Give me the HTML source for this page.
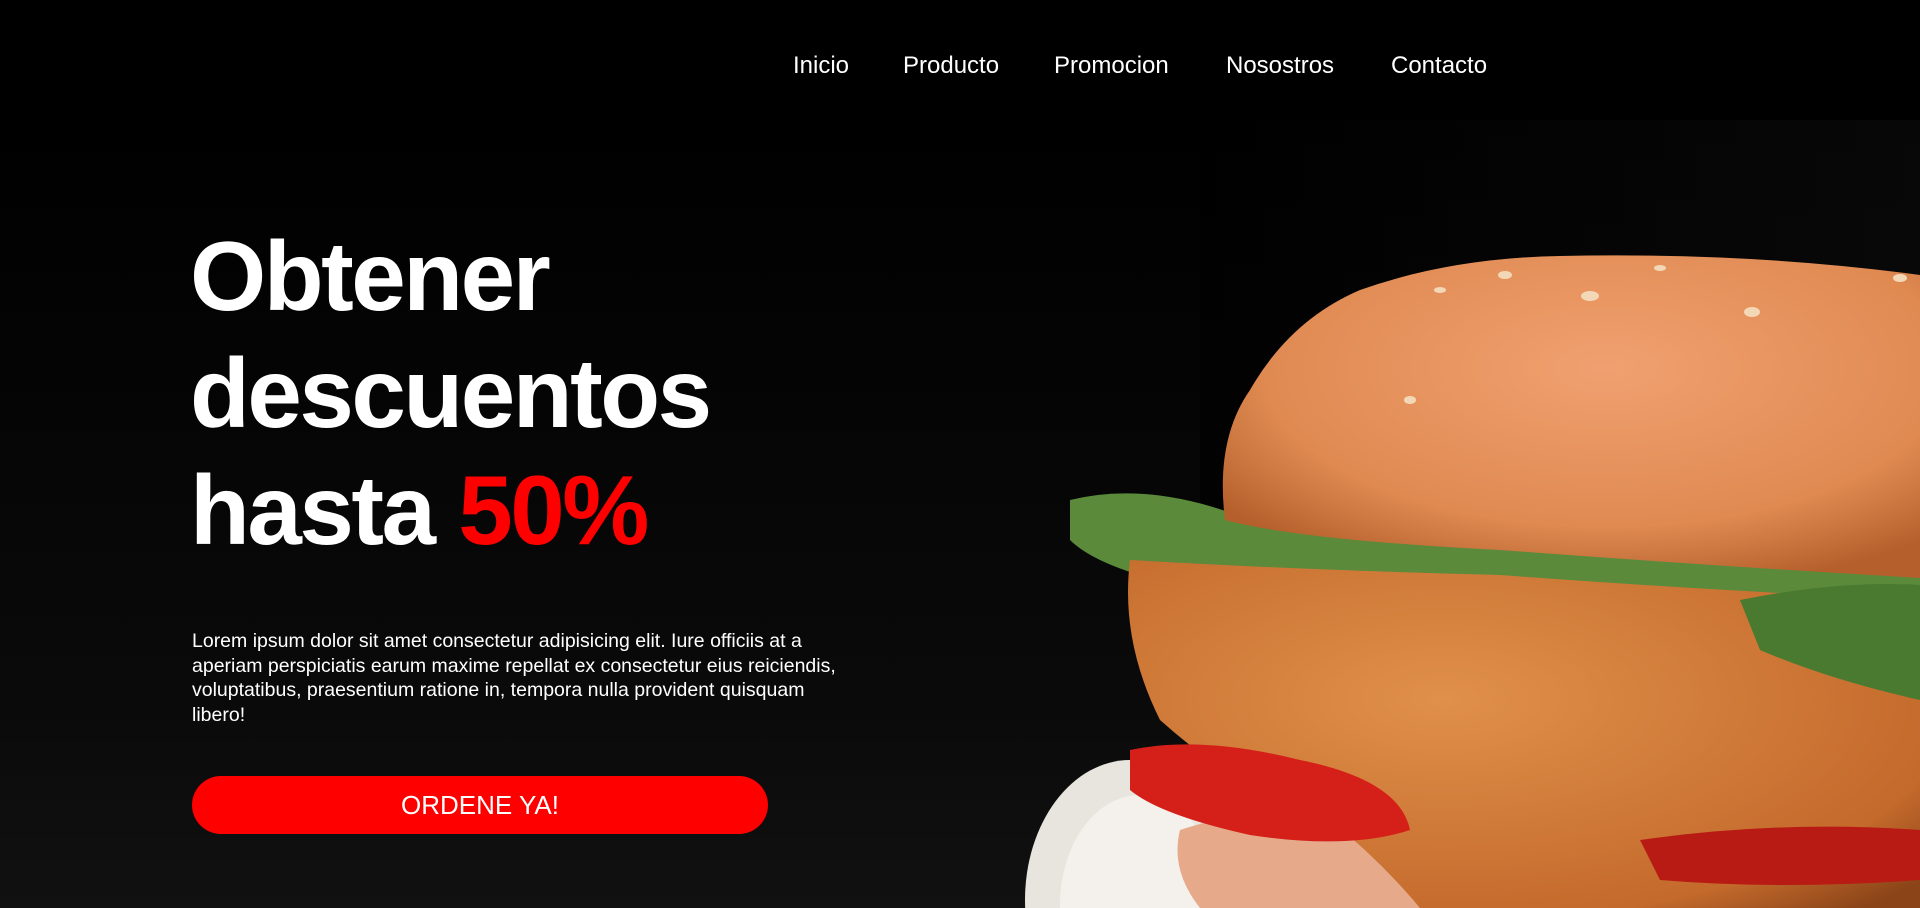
<!DOCTYPE html>
<html><head><meta charset="utf-8"><style>
*{margin:0;padding:0;box-sizing:border-box}
html,body{width:1920px;height:908px;overflow:hidden;background:#000;font-family:"Liberation Sans",Arial,sans-serif}
.hero{position:absolute;left:0;top:0;width:1920px;height:908px;background:linear-gradient(180deg,#000 0,#000 120px,#030303 300px,#0a0a0a 700px,#111 908px)}
nav{position:absolute;top:0;left:0;width:1920px;height:120px;background:#000;z-index:3}
nav a{position:absolute;top:52px;color:#fff;font-size:24px;text-decoration:none}
svg{position:absolute;left:0;top:0}
h1{position:absolute;left:190px;top:218px;color:#fff;font-size:98px;line-height:117px;font-weight:bold;letter-spacing:-2.5px;z-index:2}
h1 span{color:#ff0000}
p{position:absolute;left:192px;top:629px;width:665px;color:#fff;font-size:19.5px;line-height:24.5px;z-index:2}
.btn{position:absolute;left:192px;top:776px;width:576px;height:58px;border-radius:29px;background:#ff0000;color:#fff;font-size:26px;text-align:center;line-height:58px;z-index:2}
</style></head><body>
<div class="hero"></div>
<svg width="1920" height="908" viewBox="0 0 1920 908">
<defs>
<radialGradient id="bun" cx="0.55" cy="0.35" r="0.7"><stop offset="0" stop-color="#f0a070"/><stop offset="0.7" stop-color="#e08a52"/><stop offset="1" stop-color="#b5602c"/></radialGradient>
<radialGradient id="chk" cx="0.4" cy="0.4" r="0.8"><stop offset="0" stop-color="#e0904a"/><stop offset="0.8" stop-color="#c46a2c"/><stop offset="1" stop-color="#8a4418"/></radialGradient>
<linearGradient id="bg2" x1="0" x2="1"><stop offset="0" stop-color="#000"/><stop offset="1" stop-color="#0c0c0c"/></linearGradient>
</defs>
<rect x="1200" y="120" width="720" height="788" fill="url(#bg2)" opacity="0.6"/>
<ellipse cx="1130" cy="900" rx="105" ry="140" fill="#e8e4de"/>
<ellipse cx="1140" cy="905" rx="80" ry="110" fill="#f4f1ec"/>
<path d="M1180 830 Q1300 790 1500 820 L1560 908 L1200 908 Q1170 870 1180 830Z" fill="#e6a98a"/>
<path d="M1070 500 Q1150 480 1250 520 Q1500 540 1920 560 L1920 640 Q1500 600 1200 590 Q1100 570 1070 540Z" fill="#5a8a3a"/>
<path d="M1130 560 Q1300 570 1500 575 Q1700 590 1920 600 L1920 908 L1420 908 Q1380 860 1330 820 Q1250 800 1160 720 Q1120 640 1130 560Z" fill="url(#chk)"/>
<path d="M1130 750 Q1200 735 1300 760 Q1400 780 1410 830 Q1350 850 1250 835 Q1160 815 1130 790Z" fill="#d42018"/>
<path d="M1640 840 Q1780 820 1920 830 L1920 880 Q1780 890 1660 880Z" fill="#b81a14"/>
<path d="M1740 600 Q1840 580 1920 585 L1920 700 Q1830 680 1760 650Z" fill="#4a7a30"/>
<path d="M1225 520 Q1215 440 1250 390 Q1290 320 1360 290 Q1450 258 1560 256 Q1750 252 1920 275 L1920 578 Q1700 565 1500 550 Q1300 540 1225 520Z" fill="url(#bun)"/>
<g fill="#f3d8b8"><ellipse cx="1590" cy="296" rx="9" ry="5"/><ellipse cx="1752" cy="312" rx="8" ry="5"/><ellipse cx="1505" cy="275" rx="7" ry="4"/><ellipse cx="1660" cy="268" rx="6" ry="3"/><ellipse cx="1900" cy="278" rx="7" ry="4"/><ellipse cx="1440" cy="290" rx="6" ry="3"/><ellipse cx="1410" cy="400" rx="6" ry="4"/></g>
</svg>
<nav>
<a style="left:793px">Inicio</a>
<a style="left:903px">Producto</a>
<a style="left:1054px">Promocion</a>
<a style="left:1226px">Nosostros</a>
<a style="left:1391px">Contacto</a>
</nav>
<h1>Obtener<br>descuentos<br>hasta <span>50%</span></h1>
<p>Lorem ipsum dolor sit amet consectetur adipisicing elit. Iure officiis at a aperiam perspiciatis earum maxime repellat ex consectetur eius reiciendis, voluptatibus, praesentium ratione in, tempora nulla provident quisquam libero!</p>
<div class="btn">ORDENE YA!</div>
</body></html>
